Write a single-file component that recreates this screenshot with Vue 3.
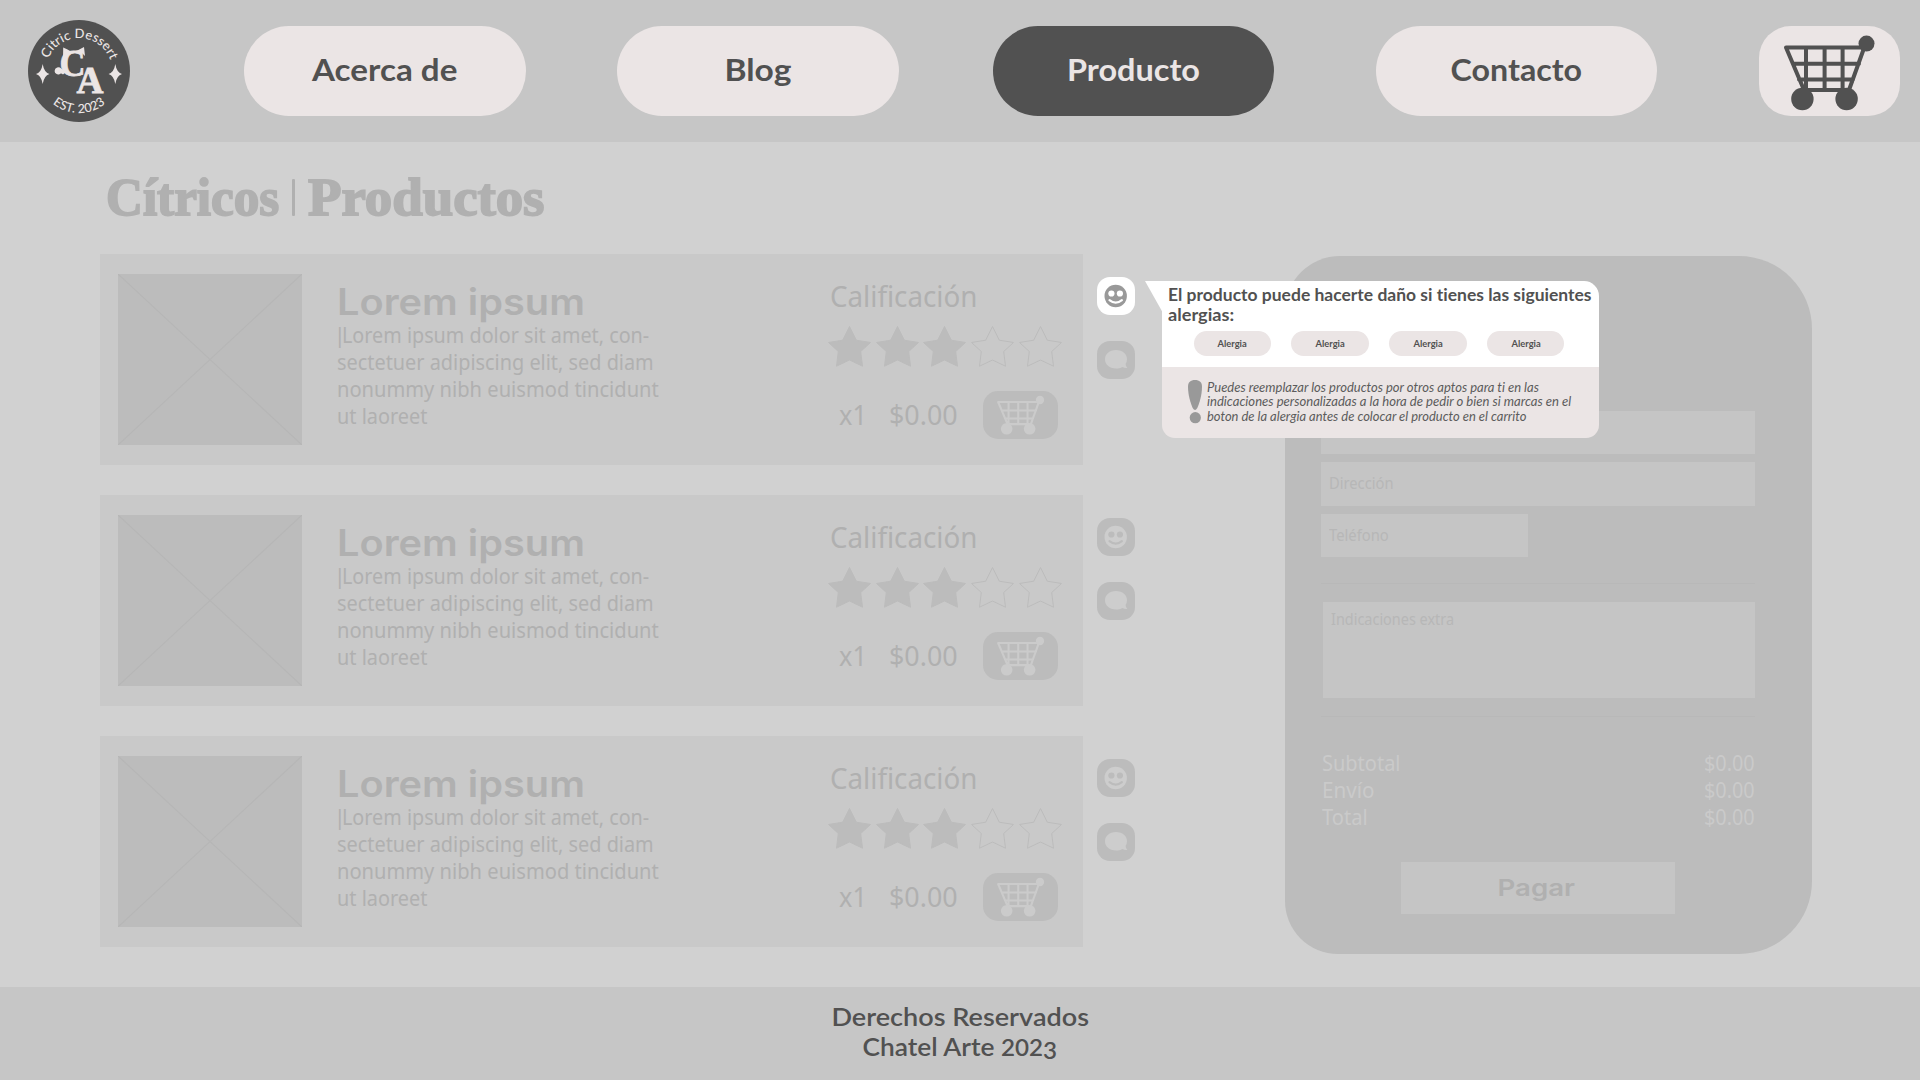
<script setup>
import { h } from 'vue'

// Stretches a line of text horizontally so that it spans a set width.
const vFit = {
  mounted(el, { value }) {
    if (value) el.style.transform = `scaleX(${(value / el.offsetWidth).toFixed(4)})`
  },
}

const nav = [
  { label: 'Acerca de', width: 145 },
  { label: 'Blog', width: 67 },
  { label: 'Producto', width: 133, active: true },
  { label: 'Contacto', width: 132 },
]

const products = [1, 2, 3].map((id) => ({ id, rating: 3, open: id === 1 }))

const description = [
  { text: 'Lorem ipsum dolor sit amet, con-', width: 307, caret: true },
  { text: 'sectetuer adipiscing elit, sed diam', width: 317 },
  { text: 'nonummy nibh euismod tincidunt', width: 322 },
  { text: 'ut laoreet', width: 90 },
]

const totals = [
  { label: 'Subtotal', width: 79 },
  { label: 'Envío', width: 52 },
  { label: 'Total', width: 46 },
]

const notice = [
  { text: 'Puedes reemplazar los productos por otros aptos para ti en las', width: 332 },
  { text: 'indicaciones personalizadas a la hora de pedir o bien si marcas en el', width: 364 },
  { text: 'boton de la alergia antes de colocar el producto en el carrito', width: 319 },
]

const CartIcon = () =>
  h('svg', { viewBox: '0 0 94 77', fill: 'currentColor' }, [
    h('path', {
      d: 'M84 13.5H4L22 56H67L83.5 10M11 29.7H77M17 45.4H71M24 13.5V56M42.6 13.5V56M60.6 13.5V56',
      fill: 'none',
      stroke: 'currentColor',
      'stroke-width': 4,
      'stroke-linejoin': 'round',
      'stroke-linecap': 'round',
    }),
    h('circle', { cx: 84.5, cy: 9.6, r: 8 }),
    h('circle', { cx: 20.4, cy: 65, r: 11.2 }),
    h('circle', { cx: 64.6, cy: 65, r: 11.2 }),
  ])
</script>

<template>
  <div class="page">
    <header class="topbar">
      <svg class="logo" viewBox="0 0 102 102">
        <defs>
          <path id="arc-top" d="M22.6 68.5A33.2 33.2 0 1 1 79.4 68.5" />
          <path id="arc-bottom" d="M9 51A42 42 0 0 0 93 51" />
        </defs>
        <circle cx="51" cy="51" r="51" fill="#515151" />
        <g fill="#ebe5e5">
          <text class="ring"><textPath href="#arc-top" startOffset="50.5%" text-anchor="middle" textLength="80">Citric Dessert</textPath></text>
          <text class="ring small"><textPath href="#arc-bottom" startOffset="50%" text-anchor="middle" textLength="57">EST. 2023</textPath></text>
          <text class="mono" x="31.5" y="56.3" font-size="38" textLength="26" lengthAdjust="spacingAndGlyphs">C</text>
          <text class="mono" x="48.5" y="73.3" font-size="38" textLength="27" lengthAdjust="spacingAndGlyphs">A</text>
          <path d="M35 38L35.2 27.5Q39 29 43 31.5L47 31Q51 30 56 27L57 36L54 33Q45 29 40 34Z" />
          <path d="M26.6 51a3.8 3.8 0 0 1 6.6-2.4L38 52L35 54.5Q33 52.6 31.5 54.3A3.7 3.7 0 0 1 26.6 51Z" />
          <path d="M14.7 44Q16 52.3 21.4 54Q16 55.7 14.7 64Q13.4 55.7 8 54Q13.4 52.3 14.7 44Z" />
          <path d="M87.3 44Q88.6 52.3 94 54Q88.6 55.7 87.3 64Q86 55.7 80.6 54Q86 52.3 87.3 44Z" />
        </g>
      </svg>
      <nav class="nav">
        <a v-for="item in nav" :key="item.label" class="pill" :class="{ active: item.active }">
          <span v-fit="item.width" class="fit center">{{ item.label }}</span>
        </a>
      </nav>
      <a class="cart"><CartIcon class="cart-icon" /></a>
    </header>

    <main class="main">
      <section class="catalog">
        <h1 class="title">
          <span class="word first"><span v-fit="173" class="fit">Cítricos</span></span>
          <i class="bar"></i>
          <span class="word"><span v-fit="236" class="fit">Productos</span></span>
        </h1>
        <div class="list">
          <div v-for="p in products" :key="p.id" class="row">
            <article class="card">
              <svg class="thumb" viewBox="0 0 184 171">
                <path d="M0 0L184 171M184 0L0 171" stroke="#b6b6b6" stroke-width="1.2" />
              </svg>
              <div class="info">
                <h2 class="name"><span v-fit="248" class="fit">Lorem ipsum</span></h2>
                <p v-for="line in description" :key="line.text" class="desc">
                  <span v-if="line.caret" class="caret">|</span>
                  <span v-fit="line.width" class="fit">{{ line.text }}</span>
                </p>
              </div>
              <div class="buy">
                <p class="rate"><span v-fit="147" class="fit">Calificación</span></p>
                <div class="stars">
                  <svg v-for="n in 5" :key="n" class="star" :class="{ on: n <= p.rating }" viewBox="-21.5 -22 43 42">
                    <path d="M0 -20.5L6.8 -6.8L21 -4.5L11.2 4.5L13 19.2L0 13L-13 19.2L-11.2 4.5L-21 -4.5L-6.8 -6.8Z" />
                  </svg>
                </div>
                <div class="order">
                  <span class="qty"><span v-fit="28" class="fit">x1</span></span>
                  <span class="price"><span v-fit="69" class="fit">$0.00</span></span>
                  <a class="add"><CartIcon class="add-icon" /></a>
                </div>
              </div>
            </article>
            <div class="side">
              <a class="chip" :class="{ open: p.open }">
                <svg viewBox="0 0 38 38">
                  <circle class="fg" cx="18.7" cy="19" r="11.2" />
                  <circle class="bg" cx="14.4" cy="16.5" r="3.1" />
                  <circle class="bg" cx="22.9" cy="16.5" r="3.1" />
                  <path class="mouth" d="M12.5 23.2Q18.7 28.2 24.9 23.2" />
                </svg>
              </a>
              <a class="chip">
                <svg viewBox="0 0 38 38">
                  <path class="fg" d="M19 9C12.5 9 8 13 8 18.2S12.5 27.4 19 27.4C21.5 27.4 23.6 26.9 25.4 25.9Q27.5 27.3 30.3 27Q28.6 25.3 28.6 22.8Q30 20.7 30 18.2C30 13 25.5 9 19 9Z" />
                </svg>
              </a>
            </div>
          </div>
        </div>
      </section>

      <aside class="checkout">
        <div class="field"></div>
        <div class="field"><span v-fit="64.5" class="fit">Dirección</span></div>
        <div class="field phone"><span v-fit="60" class="fit">Teléfono</span></div>
        <hr class="rule" />
        <div class="field extra"><span v-fit="123" class="fit">Indicaciones extra</span></div>
        <hr class="rule second" />
        <div class="totals">
          <div v-for="t in totals" :key="t.label" class="total">
            <span v-fit="t.width" class="fit">{{ t.label }}</span>
            <span v-fit="51" class="fit right">$0.00</span>
          </div>
        </div>
        <a class="pay"><span v-fit="78" class="fit center">Pagar</span></a>
      </aside>
    </main>

    <footer class="footer">
      <p><span v-fit="257" class="fit center">Derechos Reservados</span></p>
      <p><span v-fit="195" class="fit center">Chatel Arte <span class="old">202<span class="low">3</span></span></span></p>
    </footer>

    <div class="tip">
      <svg class="tail" viewBox="0 0 18 32"><path d="M0 0H18V32Z" fill="#fff" /></svg>
      <div class="tip-top">
        <p class="tip-title"><span v-fit="424" class="fit">El producto puede hacerte daño si tienes las siguientes</span></p>
        <p class="tip-title"><span v-fit="66" class="fit">alergias:</span></p>
        <div class="tags">
          <span v-for="n in 4" :key="n" class="tag"><span v-fit="29" class="fit center">Alergia</span></span>
        </div>
      </div>
      <div class="tip-bottom">
        <svg class="bang" viewBox="0 0 14 44">
          <path d="M7 0C11.5 0 14 2.3 14 6.5C14 15 11.5 23 9.3 28Q7 32 4.7 28C2.5 23 0 15 0 6.5C0 2.3 2.5 0 7 0Z" />
          <circle cx="7.3" cy="37.7" r="5.6" />
        </svg>
        <div>
          <p v-for="line in notice" :key="line.text" class="note">
            <span v-fit="line.width" class="fit">{{ line.text }}</span>
          </p>
        </div>
      </div>
    </div>
  </div>
</template>

<style>
body {
  background: #d1d1d1;
}
</style>

<style scoped>
.page {
  position: relative;
  width: 1920px;
  height: 1080px;
  overflow: hidden;
  display: flex;
  flex-direction: column;
  background: #d1d1d1;
  font-family: 'Noto Sans', 'Open Sans', sans-serif;
  color: #b0b0b0;
}
p,
h1,
h2 {
  margin: 0;
}
.fit {
  display: inline-block;
  width: max-content;
  flex: none;
  white-space: pre;
  transform-origin: left center;
  font-variant-ligatures: none;
}
.fit.center {
  transform-origin: center;
}
.fit.right {
  transform-origin: right center;
}

.topbar {
  height: 142px;
  flex: none;
  box-sizing: border-box;
  padding: 0 20px 0 28px;
  display: flex;
  align-items: center;
  background: #c6c6c6;
}
.logo {
  width: 102px;
  height: 102px;
}
.ring {
  font: 500 13px Lato, sans-serif;
}
.ring.small {
  font-size: 12.5px;
}
.mono {
  font-family: 'Liberation Serif', serif;
  font-weight: 700;
  stroke: #ebe5e5;
  stroke-width: 0.8px;
}
.nav {
  margin-left: 114px;
  display: flex;
}
.pill {
  width: 281.5px;
  height: 89.5px;
  margin-right: 91.5px;
  border-radius: 45px;
  display: flex;
  justify-content: center;
  background: #ebe5e5;
  color: #515151;
  font: 700 30px/87px Lato, sans-serif;
}
.pill:nth-child(2) {
  margin-right: 94px;
}
.pill.active {
  margin-right: 101.5px;
  background: #515151;
  color: #ebe5e5;
}
.pill:last-child {
  margin-right: 0;
}
.cart {
  width: 141px;
  height: 89.5px;
  margin-left: auto;
  border-radius: 32px;
  background: #ebe5e5;
  color: #515151;
}
.cart-icon {
  display: block;
  width: 94px;
  height: 77px;
  margin: 8px 0 0 23px;
}

.main {
  height: 845px;
  flex: none;
  display: flex;
}
.catalog {
  width: 1035px;
  padding-left: 100px;
}
.title {
  height: 112px;
  padding-left: 6px;
  display: flex;
  font: 700 52px/112px 'Liberation Serif', serif;
  -webkit-text-stroke: 1.8px #b0b0b0;
}
.word {
  width: 240px;
}
.word.first {
  width: 186px;
}
.bar {
  width: 3px;
  height: 37px;
  margin: 37px 12.5px 0 0;
  border-radius: 1px;
  background: #b0b0b0;
}
.list {
  display: flex;
  flex-direction: column;
  gap: 30.5px;
}
.row {
  display: flex;
  gap: 14px;
}
.card {
  width: 983px;
  height: 210.5px;
  box-sizing: border-box;
  padding: 19.5px 0 0 18px;
  display: flex;
  flex: none;
  background: #c9c9c9;
}
.thumb {
  width: 184px;
  height: 171px;
  flex: none;
  background: #bcbcbc;
}
.info {
  width: 493px;
  padding: 8px 0 0 35px;
  box-sizing: border-box;
}
.name {
  height: 40px;
  font: 600 37px/40px Inter, sans-serif;
}
.desc {
  height: 27px;
  display: flex;
  font-size: 21px;
  line-height: 27px;
}
.caret {
  width: 5px;
  margin-left: -3px;
  margin-right: 3px;
}
.buy {
  padding-top: 2px;
}
.rate {
  height: 40px;
  padding-left: 35px;
  font-size: 28.5px;
  line-height: 40px;
}
.stars {
  margin: 9px 0 0 33px;
  display: flex;
  gap: 4.7px;
}
.star {
  width: 43px;
  height: 42px;
  fill: none;
  stroke: #bcbcbc;
  stroke-width: 1;
}
.star.on {
  fill: #bcbcbc;
}
.order {
  margin: 24px 0 0 43.5px;
  display: flex;
  font-size: 28px;
  line-height: 46px;
}
.qty {
  width: 50px;
}
.price {
  width: 94px;
}
.add {
  width: 75px;
  height: 48px;
  border-radius: 15px;
  background: #bcbcbc;
  color: #cbcbcb;
}
.add-icon {
  display: block;
  width: 49px;
  height: 40px;
  margin: 4px 0 0 13px;
}
.side {
  padding-top: 23px;
  display: flex;
  flex-direction: column;
  gap: 26px;
}
.chip {
  width: 38px;
  height: 38px;
  border-radius: 13px;
  background: #bcbcbc;
}
.chip svg {
  display: block;
}
.fg {
  fill: #cdcdcd;
}
.bg {
  fill: #bcbcbc;
}
.mouth {
  fill: none;
  stroke: #bcbcbc;
  stroke-width: 2.2;
  stroke-linecap: round;
}
.chip.open {
  background: #fff;
}
.open .fg {
  fill: #999;
}
.open .bg {
  fill: #fff;
}
.open .mouth {
  stroke: #fff;
}

.checkout {
  width: 527px;
  height: 698px;
  margin: 114px 0 0 150px;
  box-sizing: border-box;
  padding: 154.5px 57px 0 36px;
  border-radius: 55px 73px 73px 53px;
  background: #bcbcbc;
}
.field {
  height: 43.3px;
  margin-bottom: 8.5px;
  padding-left: 8px;
  box-sizing: border-box;
  background: #c5c5c5;
  color: #b7b7b7;
  font-size: 15.5px;
  line-height: 42px;
}
.field.phone {
  width: 206.5px;
}
.rule {
  height: 1px;
  margin: 26px 0 18px;
  border: 0;
  background: #b8b8b8;
}
.field.extra {
  height: 96px;
  margin: 0 0 0 1.5px;
  line-height: 35px;
}
.rule.second {
  margin: 18px 0 0;
}
.totals {
  padding: 33px 0 0 1px;
}
.total {
  height: 26.6px;
  display: flex;
  justify-content: space-between;
  color: #cacaca;
  font-size: 21px;
  line-height: 27px;
}
.pay {
  width: 274px;
  height: 52px;
  margin: 32px 0 0 80px;
  display: flex;
  justify-content: center;
  background: #c5c5c5;
  font: 600 23px/52px Inter, sans-serif;
}
.pay .fit {
  margin-right: 3px;
}

.footer {
  flex: 1;
  padding-top: 15px;
  background: #c6c6c6;
  color: #515151;
  text-align: center;
  font: 600 24px/30px Lato, sans-serif;
}
.footer p {
  height: 30px;
}
.old {
  font-size: 0.92em;
}
.low {
  position: relative;
  top: 3px;
}

.tip {
  position: absolute;
  left: 1162px;
  top: 281px;
  width: 437px;
}
.tail {
  position: absolute;
  left: -17px;
  top: 0;
  width: 18px;
  height: 32px;
}
.tip-top {
  height: 86px;
  padding: 5px 0 0 6px;
  box-sizing: border-box;
  border-radius: 0 15px 0 0;
  background: #fff;
}
.tip-title {
  height: 19.5px;
  color: #515151;
  font: 700 16.5px/19.5px Lato, sans-serif;
}
.tags {
  padding: 5.5px 34.5px 0 25.5px;
  display: flex;
  justify-content: space-between;
}
.tag {
  width: 77.5px;
  height: 25px;
  border-radius: 13px;
  display: flex;
  justify-content: center;
  background: #ebe5e5;
  color: #515151;
  font: 700 9px/25px Lato, sans-serif;
}
.tip-bottom {
  height: 71px;
  padding: 12.5px 0 0 26px;
  box-sizing: border-box;
  display: flex;
  gap: 4.5px;
  border-radius: 0 0 13px 13px;
  background: #ebe5e5;
}
.bang {
  width: 14px;
  height: 44px;
  fill: #999;
}
.note {
  height: 14.5px;
  color: #5c5c5c;
  font: italic 400 13.2px/15px Lato, sans-serif;
}
</style>
